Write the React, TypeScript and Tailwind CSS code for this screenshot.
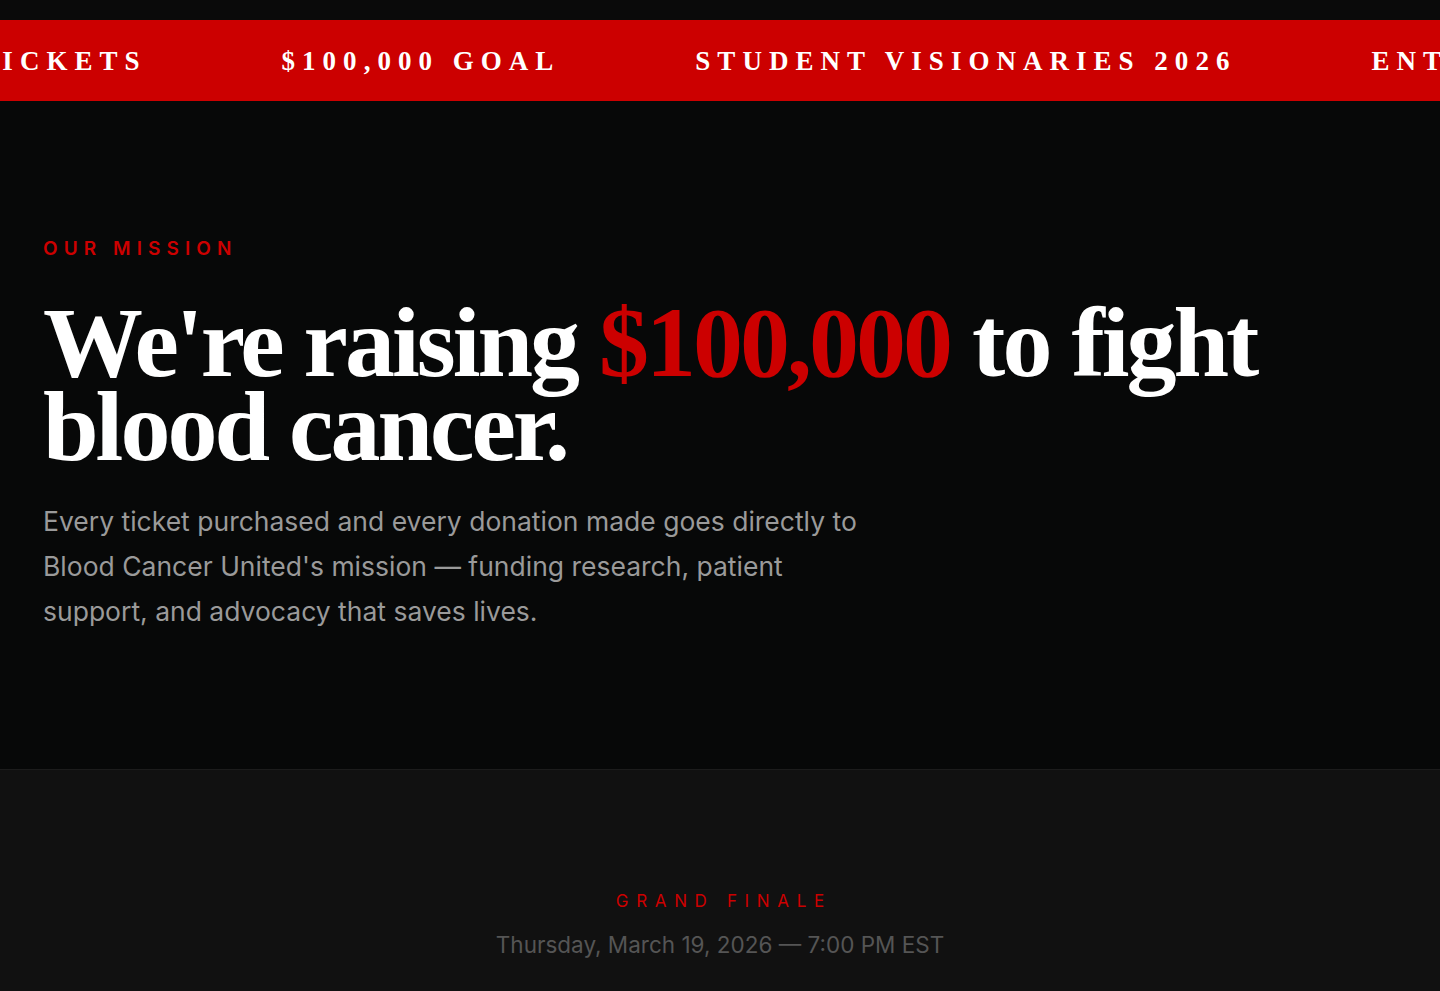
import React from "react";

const items = ["BUY TICKETS", "$100,000 GOAL", "STUDENT VISIONARIES 2026", "ENTER NOW", "BUY TICKETS"];

export default function App() {
  return (
    <div className="min-h-screen w-full bg-[#070808] overflow-hidden" style={{ fontFamily: "Inter, 'Noto Sans', sans-serif" }}>
      <div className="h-[20px] bg-[#0a0a0a]" />
      <div className="h-[81px] bg-[#cc0000] overflow-hidden flex items-center">
        <div
          className="flex items-center whitespace-nowrap ml-[-113px] pt-[2px] text-white font-bold uppercase text-[27px] tracking-[0.26em]"
          style={{ fontFamily: "'Liberation Serif', 'DejaVu Serif', serif" }}
        >
          {items.map((t, i) => (
            <span key={i} className="pr-[135px]">{t}</span>
          ))}
        </div>
      </div>
      <section className="bg-[#070808] px-[43px] pt-[136px] pb-[135px]">
        <div className="text-[#cc0000] text-[19px] font-semibold tracking-[0.32em] leading-[24px]">OUR MISSION</div>
        <h1
          className="mt-[40px] text-white font-black text-[100px] leading-[84px] tracking-[-0.03em]"
          style={{ fontFamily: "'Liberation Serif', 'DejaVu Serif', serif" }}
        >
          We're raising <span className="text-[#cc0000]">$100,000</span> to fight
          <br />
          blood cancer.
        </h1>
        <p className="mt-[30px] max-w-[840px] text-[#9a9a9a] text-[26.5px] leading-[45px]">
          Every ticket purchased and every donation made goes directly to Blood Cancer United's mission — funding research, patient support, and advocacy that saves lives.
        </p>
      </section>
      <section className="border-t border-[#1c1c1c] bg-[#111111] pt-[119px] pb-[40px] flex flex-col items-center">
        <div className="text-[#cc0000] text-[17px] tracking-[0.45em] leading-[24px] pl-[0.45em]">GRAND FINALE</div>
        <div className="mt-[17px] text-[#555555] text-[22.5px] leading-[30px]">Thursday, March 19, 2026 — 7:00 PM EST</div>
      </section>
    </div>
  );
}
